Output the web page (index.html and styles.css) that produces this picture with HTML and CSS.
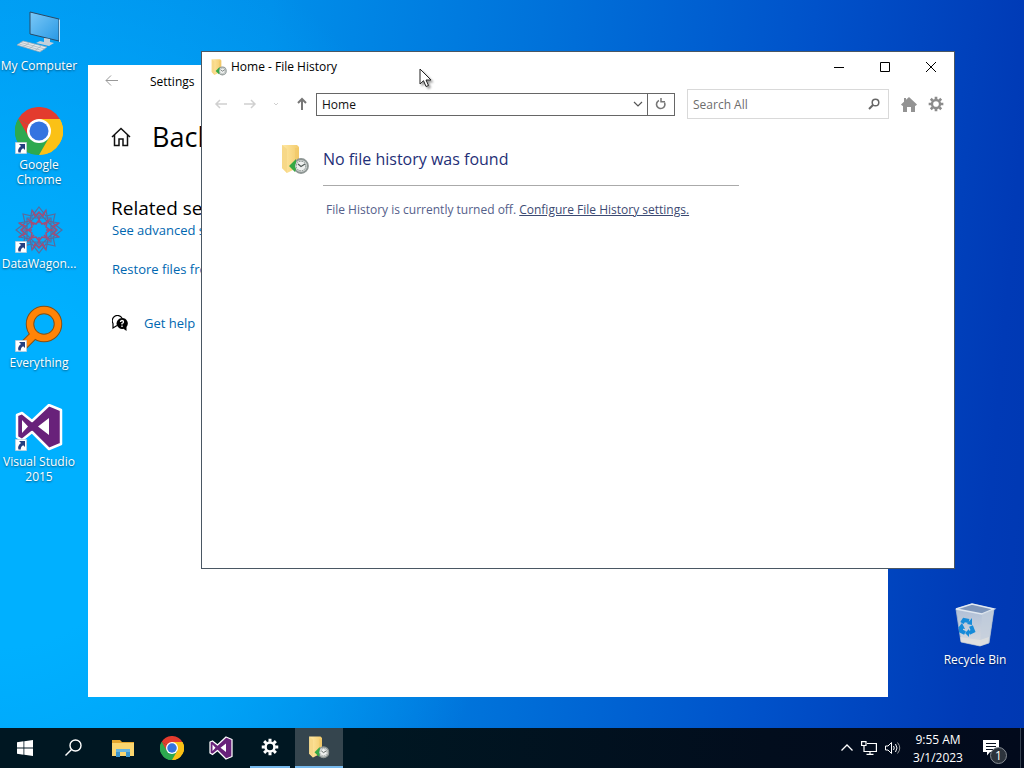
FILE: index.html
```html
<!DOCTYPE html>
<html lang="en">
<head>
  <meta charset="UTF-8">
  <meta name="viewport" content="width=device-width, initial-scale=1.0">
  <title>Desktop</title>
  <link rel="stylesheet" href="styles.css">
</head>
<body>
  <!-- icons that are used more than once -->
  <svg class="sprite" aria-hidden="true">
    <defs>
      <linearGradient id="folderFill" x1="0" y1="0" x2="1" y2="0">
        <stop offset="0" stop-color="#ffe9a6"/>
        <stop offset="1" stop-color="#f3cb6c"/>
      </linearGradient>
      <linearGradient id="screenFill" x1="0" y1="0" x2="1" y2="1">
        <stop offset="0" stop-color="#7cc9f8"/>
        <stop offset="1" stop-color="#2798e4"/>
      </linearGradient>
      <linearGradient id="binFill" x1="0" y1="0" x2="0" y2="1">
        <stop offset="0" stop-color="#a9bbd6"/>
        <stop offset="1" stop-color="#dadcdf"/>
      </linearGradient>
    </defs>
    <symbol id="chrome" viewBox="0 0 48 48">
      <path fill="#e33b2e" d="M24 24 3.2 12A24 24 0 0 1 44.8 12Z"/>
      <path fill="#fbc116" d="M24 24 44.8 12A24 24 0 0 1 24 48Z"/>
      <path fill="#2da94f" d="M24 24 24 48A24 24 0 0 1 3.2 12Z"/>
      <path fill="#e33b2e" d="M24 12H44.8L34 24H24ZM3.2 12 13.6 30 24 24Z"/>
      <path fill="#fbc116" d="M24 12H44.8A24 24 0 0 1 24 48L34.4 30Z"/>
      <path fill="#2da94f" d="M3.2 12 13.6 30 34.4 30 24 48A24 24 0 0 1 3.2 12Z"/>
      <circle cx="24" cy="24" r="12" fill="#fff"/>
      <circle cx="24" cy="24" r="9.5" fill="#3474e0"/>
    </symbol>
    <symbol id="vs" viewBox="0 0 48 48">
      <path fill="#68217a" stroke="#fff" stroke-width="2.500" stroke-linejoin="round" d="M34 2 46 7V41L34 46 17 29 7 37 2 34V12L7 10 17 18Z"/>
      <path fill="#fff" d="M34 15V32L23 23.500ZM7 17 13 23.500 7 30Z"/>
    </symbol>
    <symbol id="history" viewBox="0 0 28 32">
      <path fill="url(#folderFill)" d="M1 2H16L18 4V24L6 30 1 25Z"/>
      <path fill="#f7d888" d="M1 2 6 6V30L1 25Z"/>
      <path fill="#f0c766" d="M14 5H18V23H14Z" opacity=".6"/>
      <circle cx="20" cy="23" r="7" fill="#d5d9d8" stroke="#8e9694" stroke-width="1.800"/>
      <circle cx="20" cy="23" r="4.800" fill="#eef0ef" stroke="#7f8a86" stroke-width="1" stroke-dasharray="1.500 1"/>
      <path fill="none" stroke="#525b58" stroke-width="1.200" d="M17 21 20 23.500 24 21"/>
      <path fill="#35a845" d="M8 23 15 16V20Q13 23 15 26L14 29Z"/>
    </symbol>
    <symbol id="gear" viewBox="0 0 24 24">
      <circle cx="12" cy="12" r="6" fill="none" stroke="currentColor" stroke-width="3.500"/>
      <path fill="none" stroke="currentColor" stroke-width="4" d="M12 1V5M12 19V23M1 12H5M19 12H23M4.200 4.200 7 7M17 17 19.800 19.800M19.800 4.200 17 7M7 17 4.200 19.800"/>
    </symbol>
    <symbol id="shortcut" viewBox="0 0 12 12">
      <path fill="#fff" stroke="#aeb9c8" stroke-width=".6" d="M.3.300H11.700V11.700H.3Z"/>
      <path fill="#263f80" d="M4 2H10V8L8.200 6.200Q5.500 7.500 5.800 10.500H3.500Q2 7 6 4Z"/>
    </symbol>
  </svg>

  <main class="desktop">
    <nav class="shortcuts" aria-label="Desktop">
      <a class="shortcut" href="#computer">
        <svg class="shortcut-icon" viewBox="0 0 48 48">
          <path fill="url(#screenFill)" stroke="#294a66" stroke-width="1" d="M15 4 44 11V33L15 26Z"/>
          <path fill="none" stroke="#bfe4fa" stroke-width="1" d="M44.500 11.500V34"/>
          <path fill="#c4d0da" d="M29 30 35 31V34L39 35 34 38 21 35 25 33 29 34Z"/>
          <path fill="#e4e9ec" stroke="#93a6b5" stroke-width=".7" d="M8 33 32 39 25 44 2 37Z"/>
          <path fill="none" stroke="#a4b0b9" stroke-width=".7" d="M6 34.500 30 41M4 36 27 42.500M14 35 8 39M20 36.500 14 41M26 38 20 42.500"/>
        </svg>
        <span>My Computer</span>
      </a>
      <a class="shortcut" href="#chrome">
        <svg class="shortcut-icon" viewBox="0 0 48 48">
          <use href="#chrome" width="48" height="48"/>
          <use href="#shortcut" x="0" y="35" width="12" height="12"/>
        </svg>
        <span>Google Chrome</span>
      </a>
      <a class="shortcut" href="#datawagon">
        <svg class="shortcut-icon" viewBox="0 0 48 48">
          <g fill="none" stroke="#5b6a9b" stroke-width="1.200">
            <path d="M24 1 31 10 40 8 38 17 47 24 38 31 40 40 31 38 24 47 17 38 8 40 10 31 1 24 10 17 8 8 17 10Z"/>
            <path d="M17 4 24 13 31 4 33 15 44 17 35 24 44 31 33 33 31 44 24 35 17 44 15 33 4 31 13 24 4 17 15 15Z"/>
            <path d="M12 12H36V36H12ZM24 7 41 24 24 41 7 24Z"/>
          </g>
          <g fill="none" stroke="#a24e78" stroke-width="1.500">
            <path d="M24 9V17M24 31V39M9 24H17M31 24H39M13 13 19 19M29 29 35 35M35 13 29 19M19 29 13 35"/>
            <path d="M24 14 27 18 32 16 31 21 35 24 31 27 32 32 27 31 24 35 21 31 16 32 17 27 13 24 17 21 16 16 21 18Z"/>
            <path d="M17 4 20 10 24 6 28 10 31 4M4 17 10 20 6 24 10 28 4 31M44 17 38 20 42 24 38 28 44 31M17 44 20 38 24 42 28 38 31 44"/>
          </g>
          <use href="#shortcut" x="0" y="35" width="12" height="12"/>
        </svg>
        <span>DataWagon...</span>
      </a>
      <a class="shortcut" href="#everything">
        <svg class="shortcut-icon" viewBox="0 0 48 48">
          <path fill="none" stroke="#805018" stroke-width="9" d="M20 29 6 43"/>
          <circle cx="29" cy="19" r="14" fill="none" stroke="#805018" stroke-width="8.500"/>
          <path fill="none" stroke="#ff8407" stroke-width="7" d="M20 29 6 43"/>
          <circle cx="29" cy="19" r="14" fill="none" stroke="#ff8407" stroke-width="6.500"/>
          <use href="#shortcut" x="0" y="35" width="12" height="12"/>
        </svg>
        <span>Everything</span>
      </a>
      <a class="shortcut" href="#visualstudio">
        <svg class="shortcut-icon" viewBox="0 0 48 48">
          <use href="#vs" y="-1" width="48" height="48"/>
          <use href="#shortcut" x="0" y="35" width="12" height="12"/>
        </svg>
        <span>Visual Studio 2015</span>
      </a>
    </nav>

    <a class="shortcut recycle" href="#recycle">
      <svg class="shortcut-icon" viewBox="0 0 48 48">
        <path fill="url(#binFill)" stroke="#a7b9cd" stroke-width=".8" d="M5 7 21 2 43 7 38 41 29 44 10 40Z"/>
        <path fill="#7f96ba" stroke="#e1e8f0" stroke-width="1.500" d="M5 7 21 2 43 7 31 12Z"/>
        <path fill="#c3cedb" opacity=".65" d="M31 12 43 7 38 41 29 44Z"/>
        <path fill="#e8e5df" d="M9 35 29 38 38 35 37 41 29 44 10 40Z" opacity=".6"/>
        <path fill="none" stroke="#168bd9" stroke-width="4" d="M11 21 13 18 18 19M20 24 22 29 18 31M14 31 10 29 10 26"/>
        <path fill="#168bd9" d="M16 22 21 16V23ZM18 27V35L14 31ZM7 26 11 21 14 27Z"/>
      </svg>
      <span>Recycle Bin</span>
    </a>

    <section class="window settings" aria-label="Settings">
      <header class="settings-bar">
        <button class="icon-button" aria-label="Back">
          <svg width="14" height="14" viewBox="0 0 14 14"><path fill="none" stroke="#999" d="M13 6.500H1M6 1.500 1 6.500 6 11.500"/></svg>
        </button>
        <span>Settings</span>
      </header>
      <div class="settings-body">
        <div class="settings-heading">
          <a href="#home" aria-label="Home">
            <svg width="20" height="20" viewBox="0 0 20 20"><path fill="none" stroke="#111" stroke-width="1.500" d="M1 10 10 1.500 19 10M3.500 8V18.500H8V12H12V18.500H16.500V8"/></svg>
          </a>
          <h1>Backup</h1>
        </div>
        <h2>Related settings</h2>
        <a class="settings-link" href="#advanced">See advanced settings</a>
        <a class="settings-link" href="#restore">Restore files from a current backup</a>
        <a class="settings-link help" href="#help">
          <svg width="16" height="16" viewBox="0 0 16 16">
            <path fill="#fff" stroke="#000" stroke-width="1.200" d="M5 10.500 1 13V8.500A4.800 4.800 0 1 1 10 3"/>
            <path fill="#000" d="M10 3A5.500 5.500 0 0 1 14.500 12V16L11.500 13.800A5.500 5.500 0 1 1 10 3Z"/>
            <path fill="none" stroke="#fff" stroke-width="1.300" d="M8.500 7Q8.500 5.500 10 5.500T11.500 7Q11.500 8 10 8.500V9.500M10 10.500V12"/>
          </svg>
          <span>Get help</span>
        </a>
      </div>
    </section>

    <section class="window history" aria-label="File History">
      <header class="title-bar">
        <svg width="16" height="18" viewBox="0 0 28 32"><use href="#history"/></svg>
        <span class="title">Home - File History</span>
        <div class="window-buttons">
          <button aria-label="Minimize"><svg width="12" height="12" viewBox="0 0 12 12"><path stroke="#000" d="M1 6.500H11"/></svg></button>
          <button aria-label="Maximize"><svg width="12" height="12" viewBox="0 0 12 12"><path fill="none" stroke="#000" d="M1.500 1.500H10.500V10.500H1.500Z"/></svg></button>
          <button aria-label="Close"><svg width="12" height="12" viewBox="0 0 12 12"><path stroke="#000" d="M1 1 11 11M11 1 1 11"/></svg></button>
        </div>
      </header>

      <div class="toolbar">
        <div class="history-nav">
          <button class="icon-button" aria-label="Back" disabled><svg width="14" height="14" viewBox="0 0 14 14"><path fill="none" stroke="#d0d0d0" stroke-width="1.500" d="M13 7H2M6 3 2 7 6 11"/></svg></button>
          <button class="icon-button" aria-label="Forward" disabled><svg width="14" height="14" viewBox="0 0 14 14"><path fill="none" stroke="#d0d0d0" stroke-width="1.500" d="M1 7H12M8 3 12 7 8 11"/></svg></button>
          <button class="icon-button" aria-label="Recent locations" disabled><svg width="8" height="14" viewBox="0 0 8 14"><path fill="none" stroke="#d0d0d0" d="M2 6 4 8 6 6"/></svg></button>
          <button class="icon-button" aria-label="Up"><svg width="14" height="14" viewBox="0 0 14 14"><path fill="none" stroke="#777" stroke-width="2" d="M7 13V2M3 6 7 2 11 6"/></svg></button>
        </div>
        <div class="address">
          <input type="text" value="Home" aria-label="Address">
          <button class="icon-button" aria-label="Previous locations"><svg width="10" height="10" viewBox="0 0 10 10"><path fill="none" stroke="#555" stroke-width="1.200" d="M1 3 5 7 9 3"/></svg></button>
          <button class="icon-button refresh" aria-label="Refresh"><svg width="12" height="12" viewBox="0 0 12 12"><path fill="none" stroke="#777" stroke-width="1.600" d="M4 2.500A4.200 4.200 0 1 0 9.500 4.500"/><path fill="none" stroke="#777" stroke-width="1.500" d="M6 0V3.800H10"/></svg></button>
        </div>
        <div class="search">
          <input type="text" placeholder="Search All" aria-label="Search All">
          <button class="icon-button" aria-label="Search"><svg width="12" height="12" viewBox="0 0 12 12"><circle cx="7.500" cy="4.500" r="3.300" fill="none" stroke="#666" stroke-width="1.500"/><path stroke="#666" stroke-width="2" d="M5 7 1 11"/></svg></button>
        </div>
        <div class="tools">
          <button class="icon-button" aria-label="Home"><svg width="16" height="16" viewBox="0 0 16 16"><path fill="#939393" d="M8 1 16 8.500 14.500 10 14 9.500V16H10V11H6V16H2V9.500L1.500 10 0 8.500 3 5.700V2H5V3.800Z"/></svg></button>
          <button class="icon-button" aria-label="Options"><svg width="16" height="16"><use href="#gear"/></svg></button>
        </div>
      </div>

      <div class="message">
        <svg width="28" height="32"><use href="#history"/></svg>
        <div class="message-text">
          <h2>No file history was found</h2>
          <p>File History is currently turned off. <a href="#configure">Configure File History settings.</a></p>
        </div>
      </div>
    </section>

    <svg class="cursor" width="14" height="20" viewBox="0 0 14 20" aria-hidden="true">
      <path fill="#fff" stroke="#222" d="M1 1V16L4.500 12.700 7 18.500 9.500 17.500 7 12H12Z"/>
    </svg>
  </main>

  <footer class="taskbar">
    <div class="apps">
      <button class="app" aria-label="Start"><svg width="16" height="16" viewBox="0 0 16 16"><path fill="#fff" d="M0 2.200 6.500 1.300V7.600H0ZM7.300 1.200 16 0V7.600H7.300ZM0 8.400H6.500V14.700L0 13.800ZM7.300 8.400H16V16L7.300 14.800Z"/></svg></button>
      <button class="app" aria-label="Search"><svg width="18" height="18" viewBox="0 0 18 18"><circle cx="10.500" cy="6.500" r="5.500" fill="none" stroke="#fff" stroke-width="1.400"/><path stroke="#fff" stroke-width="1.400" d="M6.500 10.500.5 16.500"/></svg></button>
      <button class="app" aria-label="File Explorer">
        <svg width="22" height="20" viewBox="0 0 22 20"><path fill="#e5a72f" d="M0 2H8L10 4H22V18H0Z"/><path fill="#fbd66f" d="M0 5H22V18H0Z"/><path fill="#3d95cc" d="M4 11H18V19H14V14H8V19H4Z"/><path fill="#67b5df" d="M4 11H18V14H4Z"/></svg>
      </button>
      <button class="app" aria-label="Google Chrome"><svg width="24" height="24"><use href="#chrome"/></svg></button>
      <button class="app" aria-label="Visual Studio"><svg width="24" height="24"><use href="#vs"/></svg></button>
      <button class="app open" aria-label="Settings"><svg width="18" height="18"><use href="#gear"/></svg></button>
      <button class="app open active" aria-label="File History"><svg width="22" height="24" viewBox="0 0 28 32"><use href="#history"/></svg></button>
    </div>
    <div class="tray">
      <button class="icon-button" aria-label="Show hidden icons"><svg width="12" height="12" viewBox="0 0 12 12"><path fill="none" stroke="#fff" stroke-width="1.300" d="M.5 8.500 6 3 11.500 8.500"/></svg></button>
      <button class="icon-button" aria-label="Network"><svg width="16" height="14" viewBox="0 0 16 14"><path fill="none" stroke="#fff" stroke-width="1.200" d="M6 2.500H15.400V10.500H3V6M9 10.500V13M5.500 13.400H12.500M.6.600H5V4.500H.6ZM3 4.500V7"/></svg></button>
      <button class="icon-button" aria-label="Volume"><svg width="16" height="14" viewBox="0 0 16 14"><path fill="none" stroke="#fff" d="M.5 5H3L6.500 1.500V12.500L3 9H.5ZM8.500 5Q10 7 8.500 9M10.500 3Q13.500 7 10.500 11"/><path fill="none" stroke="#999" d="M12.500 1.500Q17 7 12.500 12.500"/></svg></button>
      <button class="clock"><span>9:55 AM</span><span>3/1/2023</span></button>
      <button class="notifications" aria-label="Notifications">
        <svg width="16" height="16" viewBox="0 0 16 16"><path fill="#fff" d="M0 0H16V12H7L4 15.500V12H0Z"/><path stroke="#07101e" d="M3 3.500H13M3 6.500H13M3 9.500H10"/></svg>
        <span class="badge">1</span>
      </button>
    </div>
  </footer>
</body>
</html>
```
FILE: styles.css
```css
* {
  box-sizing: border-box;
}
body {
  margin: 0;
  height: 100vh;
  display: flex;
  flex-direction: column;
  overflow: hidden;
  font-family: "Open Sans", "Noto Sans", sans-serif;
  font-size: 12px;
  line-height: 15px;
  color: #000;
}
h1, h2, p {
  margin: 0;
  font-weight: normal;
}
svg {
  display: block;
  flex: none;
}
button {
  padding: 0;
  border: 0;
  background: none;
  color: inherit;
  font: inherit;
}
input {
  flex: 1;
  min-width: 0;
  padding: 0 5px;
  border: 0;
  background: none;
  font: inherit;
  color: #111;
}
.sprite {
  position: absolute;
  width: 0;
  height: 0;
}
.icon-button {
  display: flex;
  align-items: center;
  justify-content: center;
}

/* desktop */
.desktop {
  position: relative;
  flex: 1;
  min-height: 0;
  background:
    radial-gradient(ellipse 50% 80% at 0 65%, #00b0ff 0%, #00b0ff 30%, rgba(0, 176, 255, 0) 100%),
    linear-gradient(95deg, #0098f0 0%, #008fea 25%, #0072da 50%, #0052ca 75%, #003ab6 95%, #0038b2 100%);
}
.shortcuts {
  display: flex;
  flex-direction: column;
  width: 78px;
}
.shortcut {
  display: flex;
  flex-direction: column;
  align-items: center;
  gap: 2px;
  width: 78px;
  height: 99px;
  padding-top: 8px;
  color: #fff;
  font-size: 12px;
  text-align: center;
  text-decoration: none;
  text-shadow: 0 1px 2px rgba(0, 0, 0, 0.5);
}
.shortcut-icon {
  width: 48px;
  height: 48px;
}
.recycle {
  position: absolute;
  right: 10px;
  bottom: 35px;
}

/* windows */
.window {
  position: absolute;
  overflow: hidden;
  background: #fff;
}
.settings {
  left: 88px;
  top: 65px;
  right: 136px;
  bottom: 31px;
}
.settings-bar {
  display: flex;
  align-items: center;
  gap: 31px;
  height: 32px;
  padding-left: 17px;
}
.settings-body {
  display: flex;
  flex-direction: column;
  align-items: flex-start;
  padding: 22px 23px;
}
.settings-heading {
  display: flex;
  align-items: center;
  gap: 21px;
  margin-bottom: 41px;
}
.settings-heading h1 {
  font-size: 27px;
  line-height: 36px;
}
.settings-body h2 {
  font-size: 19px;
  line-height: 24px;
}
.settings-link {
  margin: 0 1px 19px;
  color: #0067b0;
  font-size: 13px;
  line-height: 20px;
  text-decoration: none;
}
.help {
  display: flex;
  align-items: center;
  gap: 16px;
  margin-top: 15px;
}

.history {
  left: 201px;
  top: 51px;
  right: 69px;
  bottom: 159px;
  border: 1px solid #4a5763;
}
.title-bar {
  display: flex;
  align-items: center;
  gap: 4px;
  height: 29px;
  padding-left: 9px;
}
.title {
  flex: 1;
}
.window-buttons {
  display: flex;
}
.window-buttons button {
  display: flex;
  align-items: center;
  justify-content: center;
  width: 46px;
  height: 29px;
}
.toolbar {
  display: flex;
  align-items: center;
  gap: 12px;
  height: 46px;
  padding: 0 10px 0 12px;
}
.history-nav {
  display: flex;
  gap: 15px;
  margin-right: -5px;
}
.address {
  display: flex;
  flex: 1;
  height: 23px;
  border: 1px solid #666;
}
.address .icon-button {
  width: 18px;
}
.address .refresh {
  width: 27px;
  border-left: 1px solid #666;
}
.search {
  display: flex;
  width: 202px;
  height: 30px;
  border: 1px solid #d9d9d9;
}
.search input::placeholder {
  color: #6d6d6d;
  opacity: 1;
}
.search .icon-button {
  width: 28px;
}
.tools {
  display: flex;
  gap: 11px;
  color: #8b8b8b;
}
.message {
  display: flex;
  gap: 14px;
  padding: 16px 0 0 79px;
}
.message-text {
  width: 416px;
}
.message h2 {
  padding: 4px 0 14px;
  border-bottom: 1px solid #aaa;
  color: #1f2f77;
  font-size: 16px;
  line-height: 24px;
}
.message p {
  padding: 16px 3px;
  color: #54608a;
  white-space: nowrap;
}
.message a {
  color: #3c4a72;
}
.cursor {
  position: absolute;
  left: 419px;
  top: 68px;
  filter: drop-shadow(2px 2px 1px rgba(0, 0, 0, 0.4));
}

/* taskbar */
.taskbar {
  display: flex;
  justify-content: space-between;
  height: 40px;
  color: #fff;
  background: linear-gradient(90deg, #001722 0, #001722 35%, #020d1d 75%, #020a1c 100%);
}
.apps {
  display: flex;
  gap: 1px;
  padding-left: 1px;
}
.app {
  display: flex;
  align-items: center;
  justify-content: center;
  width: 48px;
}
.open {
  border-bottom: 2px solid #76b9ed;
  margin: 0 4px;
  width: 40px;
}
.active {
  width: 48px;
  margin: 0;
  background: #35454e;
}
.tray {
  display: flex;
  align-items: center;
  gap: 8px;
}
.clock {
  display: flex;
  flex-direction: column;
  gap: 3px;
  width: 58px;
}
.clock span {
  align-self: center;
}
.notifications {
  position: relative;
  display: flex;
  align-items: center;
  width: 46px;
  height: 40px;
  padding-left: 8px;
  border-right: 1px solid #35404f;
  margin-right: 3px;
}
.badge {
  position: absolute;
  left: 15px;
  bottom: 4px;
  width: 17px;
  height: 17px;
  border: 1px solid #858b93;
  border-radius: 50%;
  background: #2c333c;
}
```
